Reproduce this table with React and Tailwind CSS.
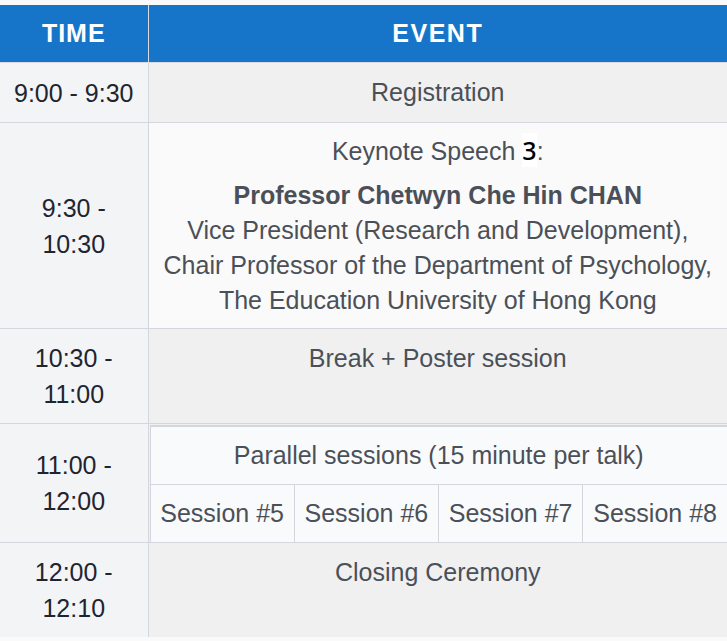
export default function App() {
  const timeCell =
    "w-[148px] border-r border-b border-[#d4d6dd] bg-[#f3f4f6] text-[#1f2530] text-center align-middle py-[11px] leading-[36px] font-normal";
  const eventCell =
    "border-b border-[#d4d6dd] bg-[#f0f0f0] text-[#4b5058] text-center align-top py-[12px] leading-[35px]";
  return (
    <div className="w-[727px] h-[641px] overflow-hidden bg-[#fafafa] pt-[5px] font-['Liberation_Sans',Arial,sans-serif] text-[25px]">
      <table className="w-[727px] table-fixed border-collapse">
        <colgroup>
          <col className="w-[148px]" />
          <col />
        </colgroup>
        <thead>
          <tr className="bg-[#1775c9] text-white">
            <th className="border-r border-b border-[#d8dce2] py-[11px] leading-[35px] font-bold tracking-[1px]">
              TIME
            </th>
            <th className="border-b border-[#d8dce2] py-[11px] leading-[35px] font-bold tracking-[1.5px]">
              EVENT
            </th>
          </tr>
        </thead>
        <tbody>
          <tr>
            <td className={timeCell}>9:00 - 9:30</td>
            <td className={eventCell}>Registration</td>
          </tr>
          <tr>
            <td className={timeCell}>
              9:30 -<br />
              10:30
            </td>
            <td className="border-b border-[#d4d6dd] bg-[#fafafa] text-[#4b5058] text-center align-top pt-[11px] pb-[10px] leading-[35px]">
              <div>
                Keynote Speech{" "}
                <span className="bg-white text-black font-['Noto_Sans',sans-serif] font-medium leading-none">3</span>:
              </div>
              <div className="mt-[9px] font-bold">Professor Chetwyn Che Hin CHAN</div>
              <div>Vice President (Research and Development),</div>
              <div>Chair Professor of the Department of Psychology,</div>
              <div>The Education University of Hong Kong</div>
            </td>
          </tr>
          <tr>
            <td className={timeCell}>
              10:30 -<br />
              11:00
            </td>
            <td className={eventCell}>Break + Poster session</td>
          </tr>
          <tr>
            <td className={timeCell}>
              11:00 -<br />
              12:00
            </td>
            <td className="border-b border-[#d4d6dd] bg-[#f0f0f0] p-0 pt-[1px] pl-[1px] align-top">
              <table className="w-full table-fixed border-collapse bg-[#f9fafb] text-[#4b5058] text-center leading-[35px]">
                <tbody>
                  <tr>
                    <td
                      colSpan={4}
                      className="border-t-2 border-l border-b border-[#d4d6dd] py-[11px]"
                    >
                      Parallel sessions (15 minute per talk)
                    </td>
                  </tr>
                  <tr>
                    <td className="border-l border-r border-[#d4d6dd] py-[11px] whitespace-nowrap">Session #5</td>
                    <td className="border-r border-[#d4d6dd] py-[11px] whitespace-nowrap">Session #6</td>
                    <td className="border-r border-[#d4d6dd] py-[11px] whitespace-nowrap">Session #7</td>
                    <td className="py-[11px] whitespace-nowrap">Session #8</td>
                  </tr>
                </tbody>
              </table>
            </td>
          </tr>
          <tr>
            <td className="w-[148px] border-r border-[#d4d6dd] bg-[#f3f4f6] text-[#1f2530] text-center align-middle py-[11px] leading-[36px]">
              12:00 -<br />
              12:10
            </td>
            <td className="bg-[#f0f0f0] text-[#4b5058] text-center align-top py-[12px] leading-[35px]">
              Closing Ceremony
            </td>
          </tr>
        </tbody>
      </table>
    </div>
  );
}
